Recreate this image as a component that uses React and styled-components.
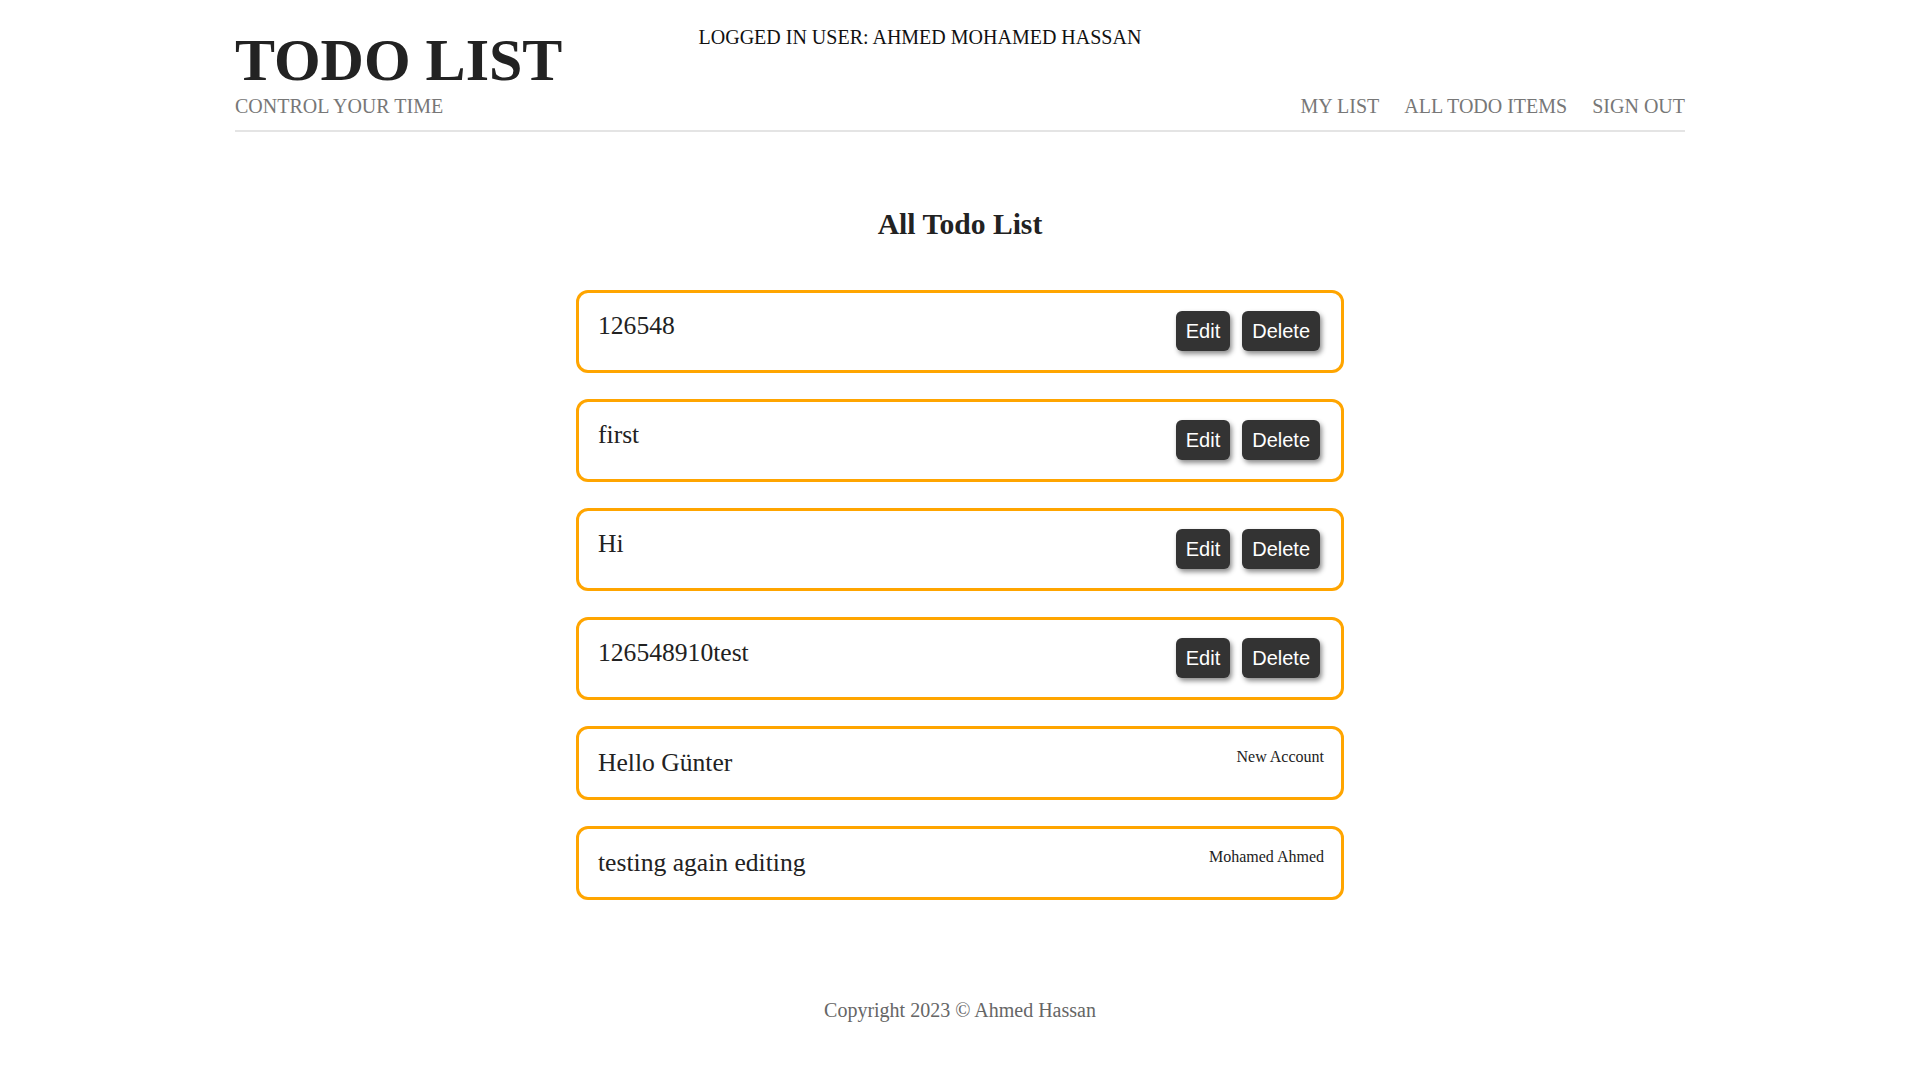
import React from "react";
import styled, { createGlobalStyle } from "styled-components";

const GlobalStyle = createGlobalStyle`
  body {
    margin: 0;
    background: #ffffff;
    font-family: "Liberation Serif", "Times New Roman", serif;
    color: #222222;
  }
`;

const Page = styled.div`
  width: 1450px;
  margin: 0 auto;
  padding-bottom: 40px;
`;

const Header = styled.header`
  display: flex;
  justify-content: space-between;
  align-items: flex-end;
  padding-top: 26px;
  padding-bottom: 12px;
  border-bottom: 2px solid #e4e4e4;
`;

const Brand = styled.div`
  display: flex;
  flex-direction: column;
`;

const Logo = styled.h1`
  margin: 0;
  font-size: 60px;
  font-weight: 700;
  line-height: normal;
  color: #222222;
`;

const Tagline = styled.div`
  font-size: 20px;
  color: #777777;
  text-transform: uppercase;
`;

const LoggedUser = styled.div`
  align-self: flex-start;
  font-size: 20px;
  color: #111111;
  text-transform: uppercase;
  margin-right: 23px;
`;

const Nav = styled.nav`
  display: flex;
  gap: 25px;
`;

const NavLink = styled.a`
  font-size: 20px;
  color: #777777;
  text-decoration: none;
  text-transform: uppercase;
  cursor: pointer;
`;

const Main = styled.main`
  display: flex;
  flex-direction: column;
  align-items: center;
`;

const Title = styled.h2`
  margin: 76px 0 49px;
  font-size: 29.6px;
  font-weight: 700;
  line-height: normal;
  color: #222222;
`;

const List = styled.div`
  width: 768px;
  display: flex;
  flex-direction: column;
  gap: 26px;
`;

const Card = styled.div`
  display: flex;
  justify-content: space-between;
  align-items: flex-start;
  padding: ${(p) => (p.$withActions ? "18px 21px 19px 19px" : "19px 20px 19px 19px")};
  border: 3px solid #ffa500;
  border-radius: 12px;
`;

const ItemText = styled.div`
  font-size: 25.6px;
  color: #222222;
`;

const Actions = styled.div`
  display: flex;
  gap: 12px;
`;

const Button = styled.button`
  font-family: "Liberation Sans", Arial, sans-serif;
  font-size: 20px;
  line-height: 24px;
  padding: 8px 10px;
  border: none;
  border-radius: 6px;
  background: #333333;
  color: #ffffff;
  box-shadow: 2px 3px 5px rgba(0, 0, 0, 0.45);
  cursor: pointer;
`;

const Author = styled.div`
  font-size: 16px;
  color: #222222;
  margin-right: -3px;
`;

const Footer = styled.footer`
  margin-top: 99px;
  text-align: center;
  font-size: 20px;
  color: #666666;
`;

const mine = [
  { id: 1, text: "126548" },
  { id: 2, text: "first" },
  { id: 3, text: "Hi" },
  { id: 4, text: "126548910test" },
];

const others = [
  { id: 5, text: "Hello Günter", author: "New Account" },
  { id: 6, text: "testing again editing", author: "Mohamed Ahmed" },
];

const App = () => {
  return (
    <>
      <GlobalStyle />
      <Page>
        <Header>
          <Brand>
            <Logo>TODO LIST</Logo>
            <Tagline>Control your time</Tagline>
          </Brand>
          <LoggedUser>Logged in user: Ahmed Mohamed Hassan</LoggedUser>
          <Nav>
            <NavLink>My List</NavLink>
            <NavLink>All Todo Items</NavLink>
            <NavLink>Sign Out</NavLink>
          </Nav>
        </Header>
        <Main>
          <Title>All Todo List</Title>
          <List>
            {mine.map((item) => (
              <Card key={item.id} $withActions>
                <ItemText>{item.text}</ItemText>
                <Actions>
                  <Button>Edit</Button>
                  <Button>Delete</Button>
                </Actions>
              </Card>
            ))}
            {others.map((item) => (
              <Card key={item.id}>
                <ItemText>{item.text}</ItemText>
                <Author>{item.author}</Author>
              </Card>
            ))}
          </List>
        </Main>
        <Footer>Copyright 2023 © Ahmed Hassan</Footer>
      </Page>
    </>
  );
};

export default App;
